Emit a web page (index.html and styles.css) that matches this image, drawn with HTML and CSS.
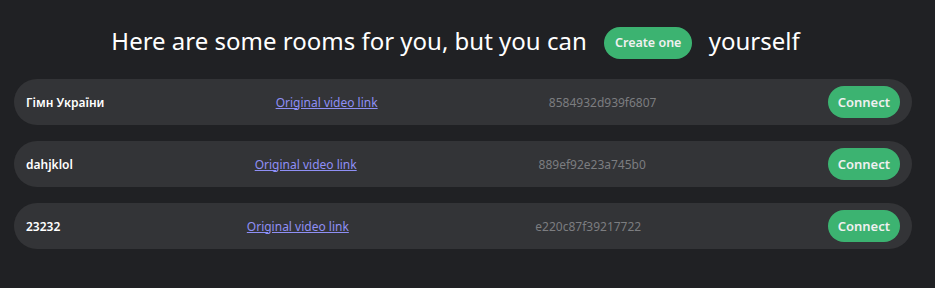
FILE: index.html
```html
<!DOCTYPE html>
<html lang="en">
<head>
  <meta charset="UTF-8"/>
  <title>Rooms</title>
  <link rel="stylesheet" href="styles.css">
</head>
<body>
  <div class="page">
    <h1 class="title">Here are some rooms for you, but you can <button class="btn create">Create one</button> yourself</h1>
    <div class="rooms">
      <div class="room">
        <span class="name">Гімн України</span>
        <a href="#" class="link">Original video link</a>
        <span class="hash">8584932d939f6807</span>
        <button class="btn connect">Connect</button>
      </div>
      <div class="room">
        <span class="name">dahjklol</span>
        <a href="#" class="link">Original video link</a>
        <span class="hash">889ef92e23a745b0</span>
        <button class="btn connect">Connect</button>
      </div>
      <div class="room">
        <span class="name">23232</span>
        <a href="#" class="link">Original video link</a>
        <span class="hash">e220c87f39217722</span>
        <button class="btn connect">Connect</button>
      </div>
    </div>
  </div>
</body>
</html>
```

FILE: styles.css
```css
body { margin:0; background:#202124; font-family:"Noto Sans", Arial, sans-serif; color:#fff; }
.page { padding:22px 14px 0 14px; width:898px; }
.title { margin:0 0 19px; padding-right:15px; font-size:24px; font-weight:400; text-align:center; line-height:38px; }
.btn { background:#3cb371; color:#f0f0f0; border:none; font-family:inherit; cursor:pointer; }
.create { height:32px; padding:0 11px; border-radius:16px; font-size:12.5px; font-weight:600; margin:0 10px 0 11px; vertical-align:3px; }
.rooms { display:flex; flex-direction:column; gap:16px; }
.room { display:flex; justify-content:space-between; align-items:center; height:46px; padding:0 12px; background:#333437; border-radius:23px; font-size:12px; }
.name { font-weight:600; color:#fff; }
.link { color:#8f8ff5; text-decoration:underline; }
.hash { color:#7c7d80; }
.connect { height:32px; padding:0 10px; border-radius:16px; font-size:13px; font-weight:600; }
```
